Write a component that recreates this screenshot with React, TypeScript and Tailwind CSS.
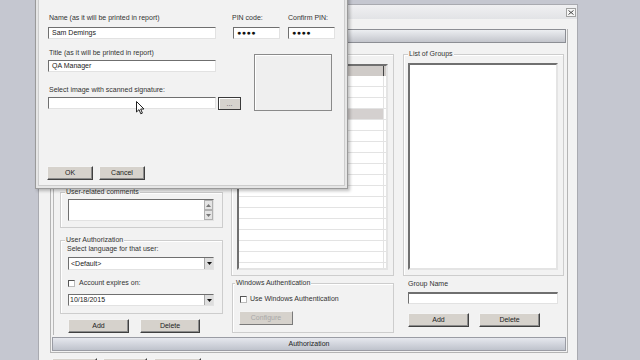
import React from 'react';

const font = "font-['Liberation_Sans',Arial,sans-serif]";

const sunken =
  'bg-white border border-t-[#6f6f6f] border-l-[#6f6f6f] border-r-[#e2e2e2] border-b-[#e2e2e2]';

const raised =
  'bg-[#d6d2cc] border border-t-[#f4f4f4] border-l-[#f4f4f4] border-r-[#404040] border-b-[#404040] shadow-[inset_-1px_-1px_0_#8c8c8c] flex items-center justify-center text-[7px] leading-[8px] text-[#222]';

const DropArrow = () => (
  <div className="w-[9px] h-full bg-[#dedede] border-l border-[#a8a8a8] flex items-center justify-center">
    <svg width="5" height="3" viewBox="0 0 5 3">
      <path d="M0 0h5L2.5 3z" fill="#111" />
    </svg>
  </div>
);

const Check = () => (
  <div className="w-[7px] h-[7px] bg-white border border-t-[#555] border-l-[#555] border-r-[#bbb] border-b-[#bbb]" />
);

const Group = ({
  label,
  className,
  labelClass,
  children,
}: {
  label?: string;
  className: string;
  labelClass?: string;
  children?: React.ReactNode;
}) => (
  <div className={`relative border border-[#cdcdcd] shadow-[inset_1px_1px_0_#fff] ${className}`}>
    {label && (
      <div
        className={`absolute top-[-5px] bg-[#f2f2f2] px-[1px] text-[7px] leading-[8px] text-[#333] whitespace-nowrap ${labelClass ?? 'left-[4px]'}`}
      >
        {label}
      </div>
    )}
    {children}
  </div>
);

const UserGrid = () => {
  const rows = Array.from({ length: 18 });
  return (
    <div className="ml-[5px] mt-[9px] w-[151px] h-[206px] bg-white border-2 border-t-[#707070] border-l-[#707070] border-r-[#e4e4e4] border-b-[#e4e4e4] overflow-hidden">
      <div className="flex h-[10px] bg-[#cfcbc8]">
        <div className="w-[145px] border-r border-[#444]" />
        <div className="flex-1" />
      </div>
      {rows.map((_, i) => (
        <div key={i} className="flex h-[11px] border-b border-[#e3e3e3]">
          <div className={`w-[145px] border-r border-[#e3e3e3] ${i === 3 ? 'bg-[#d4d0cf]' : ''}`} />
          <div className="flex-1" />
        </div>
      ))}
    </div>
  );
};

const Cursor = () => (
  <svg className="absolute left-[136px] top-[101px]" width="9" height="14" viewBox="0 0 9 14">
    <path
      d="M0.5 0.5 L0.5 11 L3 8.6 L4.8 12.8 L6.4 12.1 L4.7 8 L8 8 Z"
      fill="#fff"
      stroke="#222"
      strokeWidth="1"
      strokeLinejoin="round"
    />
  </svg>
);

const UserDialog = () => (
  <div className="absolute left-[35px] top-[-6px] w-[313px] h-[195px] border border-[#9a9a9a] bg-[#e6e6e6] p-[2px] shadow-[2px_2px_3px_rgba(0,0,0,0.25)]">
    <div className="h-full border border-[#cdcdcd] bg-[#f2f2f2] pt-[16px] pl-[9px]">
      <div className="flex">
        <div className="w-[168px]">
          <div className="pl-[1px] text-[7px] leading-[8px] text-[#333]">Name (as it will be printed in report)</div>
          <div className={`${sunken} mt-[5px] h-[12px] pl-[3px] text-[7px] leading-[10px] text-[#222]`}>Sam Demings</div>
        </div>
        <div className="ml-[17px] w-[47px]">
          <div className="-ml-[1px] text-[7px] leading-[8px] text-[#333]">PIN code:</div>
          <div className={`${sunken} mt-[5px] h-[12px] pl-[3px] text-[7px] leading-[10px] text-[#111] tracking-[0.5px]`}>
            ●●●●
          </div>
        </div>
        <div className="ml-[8px] w-[47px]">
          <div className="text-[7px] leading-[8px] text-[#333]">Confirm PIN:</div>
          <div className={`${sunken} mt-[5px] h-[12px] pl-[3px] text-[7px] leading-[10px] text-[#111] tracking-[0.5px]`}>
            ●●●●
          </div>
        </div>
      </div>
      <div className="flex">
        <div className="w-[193px]">
          <div className="mt-[10px] pl-[1px] text-[7px] leading-[8px] text-[#333]">Title (as it will be printed in report)</div>
          <div className={`${sunken} mt-[3px] w-[168px] h-[12px] pl-[3px] text-[7px] leading-[10px] text-[#222]`}>QA Manager</div>
          <div className="mt-[14px] pl-[1px] text-[7px] leading-[8px] text-[#333]">Select image with scanned signature:</div>
          <div className="mt-[3px] flex">
            <div className={`${sunken} w-[168px] h-[12px]`} />
            <div className="ml-[2px] w-[23px] h-[13px] border border-[#3a3a3a] bg-[#d6d3ce] shadow-[inset_1px_1px_0_#fff] flex items-center justify-center text-[7px] leading-[8px] text-[#555]">
              ...
            </div>
          </div>
        </div>
        <div className="ml-[13px] mt-[15px] w-[78px] h-[57px] border border-[#8a8a8a] bg-[#efefef] shadow-[inset_1px_1px_0_#fff]" />
      </div>
      <div className="mt-[55px] -ml-[1px] flex">
        <div className={`${raised} w-[46px] h-[14px]`}>OK</div>
        <div className={`${raised} ml-[6px] w-[46px] h-[14px]`}>Cancel</div>
      </div>
    </div>
  </div>
);

const MainWindow = () => (
  <div className="absolute left-[38px] top-[4px] w-[540px] h-[372px] bg-[#f2f2f2] border border-[#a9aab0]">
    <div className="h-[14px] flex items-center justify-end pr-[1px] bg-gradient-to-b from-[#f0f0f2] to-[#e2e3e6]">
      <div className="w-[10px] h-[9px] border border-[#a0a0a0] bg-[#f6f6f6] flex items-center justify-center">
        <svg width="6" height="5" viewBox="0 0 6 5">
          <path d="M0.5 0.5L5.5 4.5M5.5 0.5L0.5 4.5" stroke="#444" strokeWidth="1" />
        </svg>
      </div>
    </div>
    <div className="pl-[11px] pr-[9px] pt-[10px]">
      <div className="border border-t-0 border-[#b4b4b4]">
        <div className="mr-[1px] h-[14px] border border-[#8c8e94] bg-gradient-to-b from-[#eceef1] via-[#d8dadf] to-[#c3c5cc]" />
        <div className="flex h-[292px]">
          {/* left column */}
          <div className="ml-[2px] w-[173px] h-full border-l border-[#b8b8b8] flex flex-col">
            <Group label="User-related comments" className="ml-[6px] mt-[149px] w-[163px] h-[36px]">
              <div className={`${sunken} ml-[7px] mt-[6px] w-[146px] h-[22px] flex justify-end`}>
                <div className="w-[9px] h-full flex flex-col bg-[#f0f0f0]">
                  <div className="h-[10px] border border-[#b0b0b0] bg-[#e4e4e4] flex items-center justify-center">
                    <svg width="5" height="3" viewBox="0 0 5 3">
                      <path d="M0 3h5L2.5 0z" fill="#777" />
                    </svg>
                  </div>
                  <div className="mt-auto h-[10px] border border-[#b0b0b0] bg-[#e4e4e4] flex items-center justify-center">
                    <svg width="5" height="3" viewBox="0 0 5 3">
                      <path d="M0 0h5L2.5 3z" fill="#777" />
                    </svg>
                  </div>
                </div>
              </div>
            </Group>
            <Group label="User Authorization" className="ml-[6px] mt-[12px] w-[163px] h-[74px]">
              <div className="pt-[4px] pl-[6px] text-[7px] leading-[8px] text-[#333]">Select language for that user:</div>
              <div className={`${sunken} ml-[7px] mt-[4px] w-[146px] h-[13px] flex`}>
                <div className="flex-1 pl-[2px] text-[7px] leading-[11px] text-[#222]">&lt;Default&gt;</div>
                <DropArrow />
              </div>
              <div className="ml-[7px] mt-[9px] h-[8px] flex items-center">
                <Check />
                <div className="ml-[4px] text-[7px] leading-[8px] text-[#333]">Account expires on:</div>
              </div>
              <div className={`${sunken} ml-[7px] mt-[7px] w-[146px] h-[12px] flex`}>
                <div className="flex-1 pl-[1px] text-[7px] leading-[10px] text-[#222]">10/18/2015</div>
                <DropArrow />
              </div>
            </Group>
            <div className="mt-[5px] ml-[14px] flex">
              <div className={`${raised} w-[61px] h-[14px]`}>Add</div>
              <div className={`${raised} ml-[11px] w-[60px] h-[14px]`}>Delete</div>
            </div>
          </div>
          {/* middle column */}
          <div className="ml-[5px] w-[163px] flex flex-col">
            <Group className="mt-[11px] w-[163px] h-[222px]">
              <UserGrid />
            </Group>
            <Group label="Windows Authentication" labelClass="left-[2px]" className="ml-[1px] mt-[7px] w-[162px] h-[50px]">
              <div className="pt-[11px] pl-[7px] flex items-center">
                <Check />
                <div className="ml-[3px] text-[7px] leading-[8px] text-[#333]">Use Windows Authentication</div>
              </div>
              <div className="ml-[6px] mt-[8px] w-[54px] h-[14px] bg-[#d6d2cc] border border-t-[#f4f4f4] border-l-[#f4f4f4] border-r-[#7a7a7a] border-b-[#7a7a7a] flex items-center justify-center text-[7px] leading-[8px] text-[#a8a8a8]">
                Configure
              </div>
            </Group>
          </div>
          {/* right column */}
          <div className="ml-[9px] w-[161px] flex flex-col">
            <Group label="List of Groups" className="mt-[11px] w-[161px] h-[222px]">
              <div className="ml-[4px] mt-[8px] w-[150px] h-[207px] bg-white border-2 border-t-[#707070] border-l-[#707070] border-r-[#e4e4e4] border-b-[#e4e4e4]" />
            </Group>
            <div className="mt-[4px] pl-[5px] text-[7px] leading-[8px] text-[#333]">Group Name</div>
            <div className={`${sunken} ml-[5px] mt-[4px] w-[150px] h-[12px] border-t-2`} />
            <div className="mt-[9px] ml-[5px] flex">
              <div className={`${raised} w-[61px] h-[14px]`}>Add</div>
              <div className={`${raised} ml-[10px] w-[61px] h-[14px]`}>Delete</div>
            </div>
          </div>
        </div>
        <div className="ml-[1px] mr-[1px] mt-[2px] mb-[1px] h-[14px] border border-[#9a9ca4] bg-gradient-to-b from-[#e6e8ee] via-[#d2d5dd] to-[#bfc3cc] flex items-center justify-center text-[7px] leading-[8px] text-[#222]">
          Authorization
        </div>
      </div>
      <div className="mt-[5px] flex">
        <div className={`${raised} ml-[2px] w-[45px] h-[14px]`} />
        <div className={`${raised} ml-[6px] w-[44px] h-[14px]`} />
        <div className={`${raised} ml-[7px] w-[47px] h-[14px]`} />
      </div>
    </div>
  </div>
);

export default function App() {
  return (
    <div className={`relative w-[640px] h-[360px] overflow-hidden bg-[#c5c7d0] ${font}`}>
      <MainWindow />
      <UserDialog />
      <Cursor />
    </div>
  );
}
